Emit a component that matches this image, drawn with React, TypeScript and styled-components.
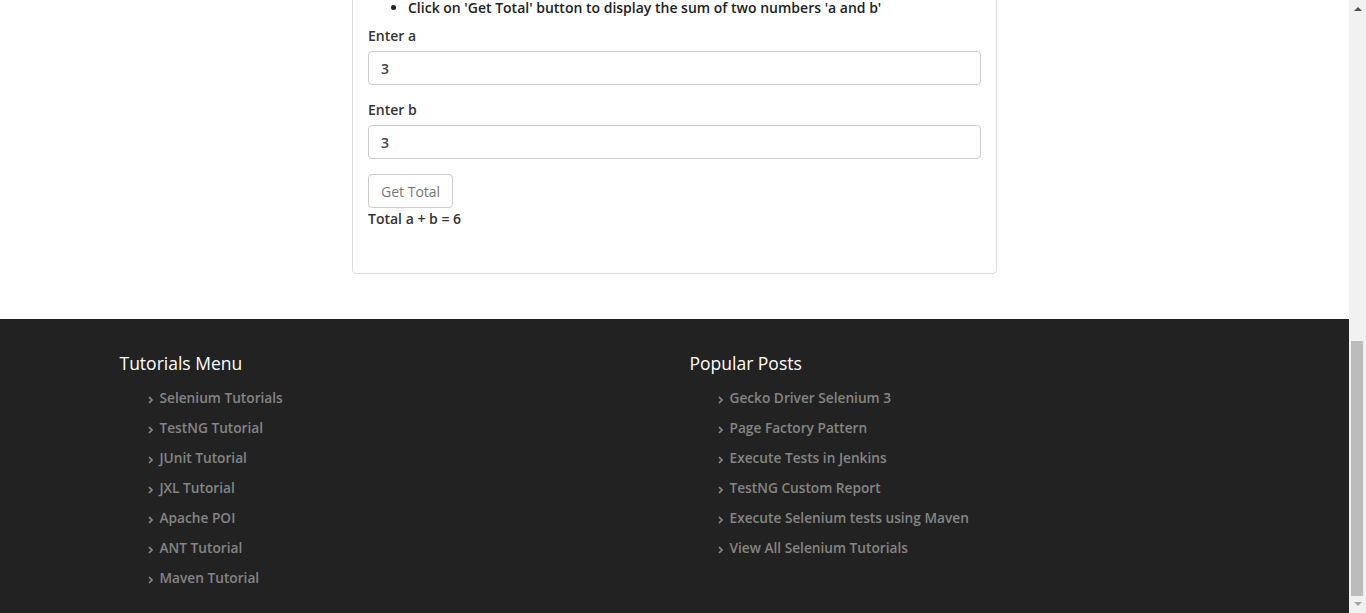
import React, { useLayoutEffect } from "react";
import styled, { createGlobalStyle } from "styled-components";

const GlobalStyle = createGlobalStyle`
  html, body {
    margin: 0;
    padding: 0;
  }
  body {
    font-family: "Open Sans", "Noto Sans", sans-serif;
    font-size: 14px;
    line-height: 1.5;
    color: #212529;
    background: #fff;
  }
  * { box-sizing: border-box; }
`;

// page area left of the (drawn) scrollbar
const Page = styled.div`
  width: calc(100% - 17px);
`;

const Main = styled.main`
  display: flex;
  justify-content: center;
  padding: 0 0 45px;
`;

const Card = styled.section`
  width: 645px;
  border: 1px solid #dcdcdc;
  border-radius: 4px;
  padding: 15px 15px 44px;
`;

const Steps = styled.ul`
  margin: 0 0 8px;
  padding-left: 40px;
  font-weight: 600;
  font-size: 14px;
  line-height: 21px;
  color: #222;
`;

const FormGroup = styled.div`
  margin-bottom: 15px;
`;

const Label = styled.label`
  display: block;
  margin-bottom: 5px;
  font-weight: 600;
  font-size: 14px;
  line-height: 20px;
  color: #333;
`;

const Input = styled.input`
  display: block;
  width: 100%;
  height: 34px;
  padding: 6px 12px;
  font-family: inherit;
  font-size: 14px;
  font-weight: 600;
  color: #444;
  border: 1px solid #ccc;
  border-radius: 4px;
  background: #fff;
  outline: none;
`;

const Button = styled.button`
  display: block;
  height: 34px;
  padding: 6px 12px;
  font-family: inherit;
  font-size: 14px;
  font-weight: 400;
  color: #777;
  background: #fff;
  border: 1px solid #ccc;
  border-radius: 4px;
`;

const Result = styled.div`
  font-weight: 600;
  font-size: 14px;
  line-height: 21px;
  color: #333;
`;

const Footer = styled.footer`
  background: #222;
  padding: 32px 0 20px;
`;

const Container = styled.div`
  width: 1140px;
  margin: 0 auto;
  display: grid;
  grid-template-columns: 1fr 1fr;
`;

const Column = styled.div`
  padding: 0 15px;
`;

const Heading = styled.h4`
  margin: 0 0 8px;
  font-size: 17.5px;
  line-height: 24px;
  font-weight: 400;
  color: #fff;
`;

const LinkList = styled.ul`
  list-style: none;
  margin: 0;
  padding-left: 28px;
`;

const LinkItem = styled.li`
  display: flex;
  align-items: center;
  gap: 7px;
  height: 30px;
`;

const Anchor = styled.a`
  color: #858585;
  font-weight: 600;
  font-size: 13.7px;
  text-decoration: none;
`;

const Chevron = () => (
  <svg width="5" height="8" viewBox="0 0 5 8" style={{ marginTop: 3 }}>
    <polyline points="1,1 4,4 1,7" fill="none" stroke="#8a8a8a" strokeWidth="1.6" />
  </svg>
);

/* drawn scrollbar, page scrolled to the bottom */
const ScrollTrack = styled.div`
  position: fixed;
  top: 0;
  right: 0;
  width: 17px;
  height: 100%;
  background: #f1f1f1;
  display: flex;
  flex-direction: column;
  align-items: center;
  justify-content: space-between;
`;

const ScrollArrow = styled.div<{ $up?: boolean; $dim?: boolean }>`
  width: 0;
  height: 0;
  margin: 7px 0;
  border-left: 4px solid transparent;
  border-right: 4px solid transparent;
  ${(p) =>
    p.$up
      ? `border-bottom: 4px solid ${p.$dim ? "#a3a3a3" : "#505050"};`
      : `border-top: 4px solid ${p.$dim ? "#a3a3a3" : "#505050"};`}
`;

const ScrollThumb = styled.div`
  position: absolute;
  left: 2px;
  right: 3px;
  top: 341px;
  height: 255px;
  background: #bcbcbc;
`;

const tutorials = [
  "Selenium Tutorials",
  "TestNG Tutorial",
  "JUnit Tutorial",
  "JXL Tutorial",
  "Apache POI",
  "ANT Tutorial",
  "Maven Tutorial",
];

const posts = [
  "Gecko Driver Selenium 3",
  "Page Factory Pattern",
  "Execute Tests in Jenkins",
  "TestNG Custom Report",
  "Execute Selenium tests using Maven",
  "View All Selenium Tutorials",
];

const LinkColumn = ({ title, items }: { title: string; items: string[] }) => (
  <Column>
    <Heading>{title}</Heading>
    <LinkList>
      {items.map((item) => (
        <LinkItem key={item}>
          <Chevron />
          <Anchor href="#">{item}</Anchor>
        </LinkItem>
      ))}
    </LinkList>
  </Column>
);

export default function App() {
  useLayoutEffect(() => {
    window.scrollTo(0, document.documentElement.scrollHeight);
  }, []);

  return (
    <>
      <GlobalStyle />
      <Page>
        <Main>
          <Card>
            <Steps>
              <li>Click on 'Get Total' button to display the sum of two numbers 'a and b'</li>
            </Steps>
            <FormGroup>
              <Label>Enter a</Label>
              <Input defaultValue="3" />
            </FormGroup>
            <FormGroup>
              <Label>Enter b</Label>
              <Input defaultValue="3" />
            </FormGroup>
            <Button>Get Total</Button>
            <Result>Total a + b = 6</Result>
          </Card>
        </Main>
        <Footer>
          <Container>
            <LinkColumn title="Tutorials Menu" items={tutorials} />
            <LinkColumn title="Popular Posts" items={posts} />
          </Container>
        </Footer>
      </Page>
      <ScrollTrack>
        <ScrollArrow $up />
        <ScrollThumb />
        <ScrollArrow $dim />
      </ScrollTrack>
    </>
  );
}
